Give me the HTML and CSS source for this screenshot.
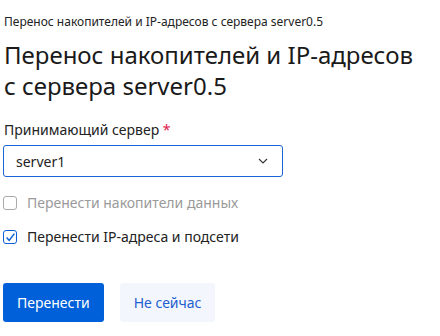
FILE: index.html
```html
<!DOCTYPE html>
<html>
<head>
  <meta charset="UTF-8">
  <title>Перенос накопителей и IP-адресов</title>
  <link rel="stylesheet" href="styles.css">
</head>
<body>
  <div class="dialog">
    <div class="crumb">Перенос накопителей и IP-адресов с сервера server0.5</div>
    <h1 class="title">Перенос накопителей и <span class="nowrap">IP-адресов</span> с сервера server0.5</h1>

    <div class="field">
      <label class="label">Принимающий сервер <span class="req">*</span></label>
      <div class="select">
        <span>server1</span>
        <svg class="chevron" width="10" height="6" viewBox="0 0 10 6">
          <path d="M1 1 L5 5 L9 1" fill="none" stroke="#333" stroke-width="1.1"/>
        </svg>
      </div>
    </div>

    <div class="check disabled">
      <span class="box"></span>
      <span>Перенести накопители данных</span>
    </div>
    <div class="check">
      <span class="box checked">
        <svg width="11" height="11" viewBox="0 0 11 11">
          <path d="M1.6 5.4 L4.2 8.4 L9.4 1.6" fill="none" stroke="#0a5fd8" stroke-width="1.5"/>
        </svg>
      </span>
      <span>Перенести IP-адреса и подсети</span>
    </div>

    <div class="actions">
      <button class="btn btn-primary">Перенести</button>
      <button class="btn btn-secondary">Не сейчас</button>
    </div>
  </div>
</body>
</html>
```

FILE: styles.css
```css
body {
  margin: 0;
  background: #fff;
  font-family: "Noto Sans", "Open Sans", sans-serif;
  color: #1f1f1f;
}

.dialog {
  padding: 14px 4px 0 4px;
}

.crumb {
  font-size: 12px;
  line-height: 16px;
  color: #222;
}

.title {
  margin: 9px 0 0 0;
  max-width: 418px;
  font-size: 24px;
  font-weight: 400;
  line-height: 31px;
  color: #1a1a1a;
}

.nowrap {
  white-space: nowrap;
}

.field {
  margin-top: 19px;
}

.label {
  display: block;
  font-size: 14px;
  line-height: 20px;
  color: #222;
}

.req {
  color: #e0204a;
}

.select {
  margin: 5px 0 0 -1px;
  width: 280px;
  height: 32px;
  box-sizing: border-box;
  border: 1px solid #1a64d8;
  border-radius: 3px;
  display: flex;
  align-items: center;
  justify-content: space-between;
  padding: 0 14px 0 12px;
  font-size: 14px;
  color: #222;
}

.check {
  display: flex;
  align-items: center;
  gap: 10px;
  font-size: 14px;
  line-height: 20px;
  margin-top: 16px;
  color: #222;
}

.check + .check {
  margin-top: 14px;
}

.check.disabled {
  color: #9a9a9a;
}

.box {
  flex: none;
  width: 14px;
  height: 14px;
  box-sizing: border-box;
  margin-left: -1px;
  border: 1px solid #aaa;
  border-radius: 3px;
  display: flex;
  align-items: center;
  justify-content: center;
}

.box.checked {
  border-color: #0a5fd8;
}

.actions {
  display: flex;
  gap: 16px;
  margin: 36px 0 0 -1px;
}

.btn {
  height: 39px;
  padding: 0 14px;
  border: none;
  border-radius: 3px;
  font-family: inherit;
  font-size: 14px;
  cursor: pointer;
}

.btn-primary {
  background: #0060d9;
  color: #fff;
}

.btn-secondary {
  background: #f3f6fc;
  color: #1f5fd0;
}
```
